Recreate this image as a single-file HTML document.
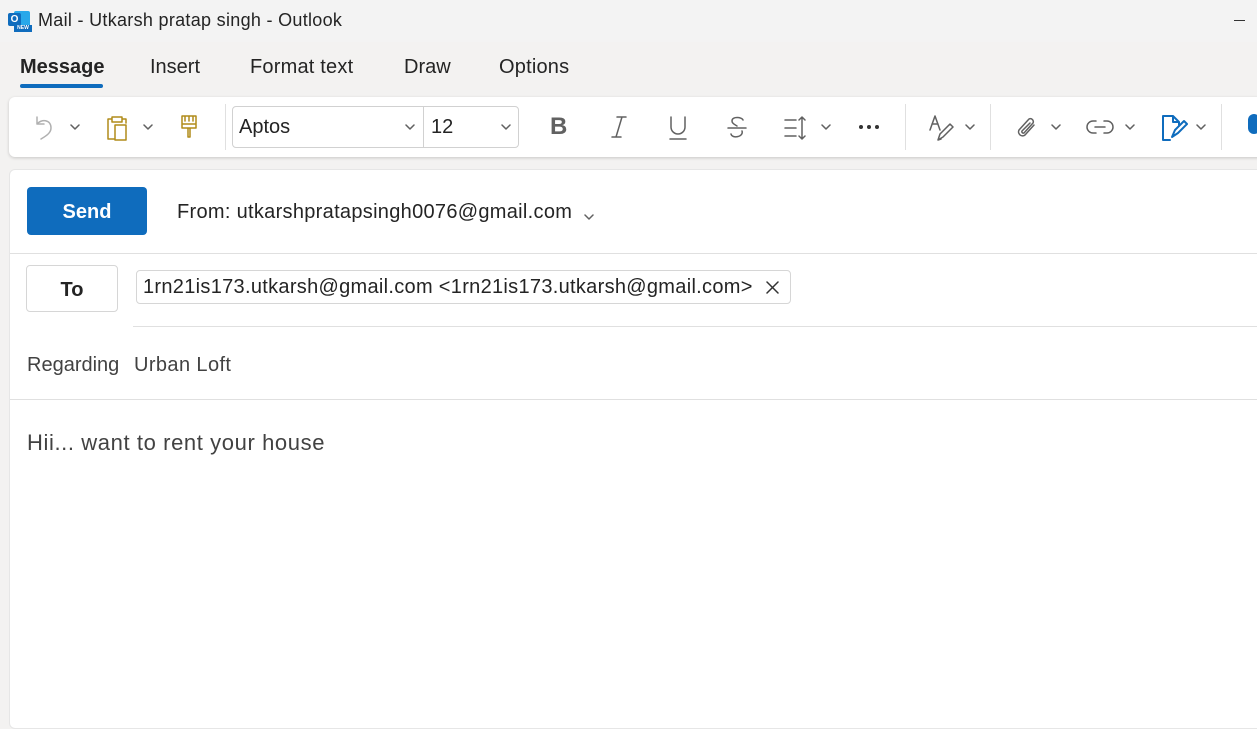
<!DOCTYPE html>
<html><head><style>
*{margin:0;padding:0;box-sizing:border-box}
body{width:1257px;height:710px;overflow:hidden;background:#f3f2f1;font-family:"Liberation Sans",sans-serif;color:#242424;position:relative}
.a{position:absolute;white-space:nowrap}
svg{position:absolute;fill:none;stroke:#616161;stroke-width:1.5;stroke-linecap:round;stroke-linejoin:round}
.chev{width:10px;height:6px}
</style></head><body>
<div class="a" style="left:0;top:0;width:1257px;height:42px;background:#f3f3f3"></div>
<div class="a" style="left:8px;top:9px;width:24px;height:24px">
 <div class="a" style="left:6px;top:2px;width:16px;height:18px;background:#28a8ea;border-radius:2px"></div>
 <div class="a" style="left:0;top:4px;width:13px;height:13px;background:#0f6cbd;border-radius:2px;color:#fff;font-size:10px;font-weight:bold;text-align:center;line-height:13px">O</div>
 <div class="a" style="left:6px;top:16px;width:18px;height:7px;background:#0f6cbd;color:#fff;font-size:5px;font-weight:bold;line-height:7px;text-align:center">NEW</div>
</div>
<div class="a" style="left:38px;top:10px;font-size:18px;letter-spacing:0.3px">Mail - Utkarsh pratap singh - Outlook</div>
<div class="a" style="left:1234px;top:20px;width:11px;height:1px;background:#333"></div>

<div class="a" style="left:20px;top:56px;font-size:20px;font-weight:bold;color:#242424">Message</div>
<div class="a" style="left:20px;top:84px;width:83px;height:4px;border-radius:2px;background:#0f6cbd"></div>
<div class="a" style="left:150px;top:56px;font-size:20px">Insert</div>
<div class="a" style="left:250px;top:56px;font-size:20px;letter-spacing:0.2px">Format text</div>
<div class="a" style="left:404px;top:56px;font-size:20px">Draw</div>
<div class="a" style="left:499px;top:56px;font-size:20px;letter-spacing:0.2px">Options</div>

<div class="a" style="left:9px;top:97px;width:1270px;height:60px;background:#fff;border-radius:6px;box-shadow:0 1px 3px rgba(0,0,0,.18)"></div>
<svg style="left:33px;top:114px;width:24px;height:26px;stroke:#b0b0b0" viewBox="0 0 24 26"><path d="M4 3v7h7M4 10c4-5 14-5 14 4 0 5-5 8-10 11"/></svg>
<svg class="chev" style="left:70px;top:124px" viewBox="0 0 10 6"><path d="M1 1l4 4 4-4"/></svg>
<svg style="left:104px;top:114px;width:26px;height:28px;stroke:#b08c1a" viewBox="0 0 26 28"><path d="M8 5H4v20h6M18 5h4v4M8 3h10v5H8zM11 11h11v15H11z"/></svg>
<svg class="chev" style="left:143px;top:124px" viewBox="0 0 10 6"><path d="M1 1l4 4 4-4"/></svg>
<svg style="left:179px;top:114px;width:20px;height:26px;stroke:#b08c1a" viewBox="0 0 20 26"><path d="M3 2h14v12H3zM3 10h14M9 14v9h2v-9M6 2v5M10 2v5M14 2v5"/></svg>
<div class="a" style="left:225px;top:104px;width:1px;height:46px;background:#e0e0e0"></div>
<div class="a" style="left:232px;top:106px;width:287px;height:42px;border:1px solid #d1d1d1;border-radius:4px"></div>
<div class="a" style="left:423px;top:107px;width:1px;height:40px;background:#d1d1d1"></div>
<div class="a" style="left:239px;top:116px;font-size:20px">Aptos</div>
<svg class="chev" style="left:405px;top:124px" viewBox="0 0 10 6"><path d="M1 1l4 4 4-4"/></svg>
<div class="a" style="left:431px;top:116px;font-size:20px">12</div>
<svg class="chev" style="left:501px;top:124px" viewBox="0 0 10 6"><path d="M1 1l4 4 4-4"/></svg>
<div class="a" style="left:550px;top:113px;font-size:24px;font-weight:bold;color:#616161">B</div>
<svg style="left:608px;top:115px;width:22px;height:24px" viewBox="0 0 22 24"><path d="M9 2h9M4 22h9M14 2L8 22"/></svg>
<svg style="left:667px;top:115px;width:22px;height:26px" viewBox="0 0 22 26"><path d="M4 2v10a7 7 0 0014 0V2M3 24h16"/></svg>
<svg style="left:726px;top:115px;width:22px;height:26px" viewBox="0 0 22 26"><path d="M17 5c-1-3-11-4-11 1 0 3 4 4 5 5M2 13h18M16 16c2 6-10 8-11 3"/></svg>
<svg style="left:783px;top:115px;width:28px;height:26px" viewBox="0 0 28 26"><path d="M2 5h11M2 13h11M2 21h11M19 2v22M16 5l3-3 3 3M16 21l3 3 3-3"/></svg>
<svg class="chev" style="left:821px;top:124px" viewBox="0 0 10 6"><path d="M1 1l4 4 4-4"/></svg>
<svg style="left:858px;top:124px;width:22px;height:6px;fill:#333;stroke:none" viewBox="0 0 22 6"><circle cx="3" cy="3" r="2"/><circle cx="11" cy="3" r="2"/><circle cx="19" cy="3" r="2"/></svg>
<div class="a" style="left:905px;top:104px;width:1px;height:46px;background:#e0e0e0"></div>
<svg style="left:928px;top:114px;width:28px;height:28px" viewBox="0 0 28 28"><path d="M2 16L7 2l5 14M4 10h6M10 26l2-6 10-10 3 3-10 10zM10 26l3-1"/></svg>
<svg class="chev" style="left:965px;top:124px" viewBox="0 0 10 6"><path d="M1 1l4 4 4-4"/></svg>
<div class="a" style="left:990px;top:104px;width:1px;height:46px;background:#e0e0e0"></div>
<svg style="left:1014px;top:114px;width:26px;height:28px" viewBox="0 0 26 28"><path d="M20 11l-9 10a4 4 0 01-6-5L15 5a3 3 0 014 4L10 19a1.5 1.5 0 01-2-2l8-8"/></svg>
<svg class="chev" style="left:1051px;top:124px" viewBox="0 0 10 6"><path d="M1 1l4 4 4-4"/></svg>
<svg style="left:1086px;top:118px;width:28px;height:18px" viewBox="0 0 28 18"><path d="M10 3H7a6 6 0 000 12h3M18 3h3a6 6 0 010 12h-3M9 9h10"/></svg>
<svg class="chev" style="left:1125px;top:124px" viewBox="0 0 10 6"><path d="M1 1l4 4 4-4"/></svg>
<svg style="left:1160px;top:113px;width:28px;height:30px;stroke:#0f6cbd;stroke-width:2" viewBox="0 0 28 30"><path d="M10 27H3V3h10l6 6v3M13 3v6h6M12 24l3-7 9-9 3 3-9 9z"/></svg>
<svg class="chev" style="left:1196px;top:124px" viewBox="0 0 10 6"><path d="M1 1l4 4 4-4"/></svg>
<div class="a" style="left:1221px;top:104px;width:1px;height:46px;background:#e0e0e0"></div>
<div class="a" style="left:1248px;top:114px;width:12px;height:20px;border-radius:6px;background:#0f6cbd"></div>

<div class="a" style="left:9px;top:169px;width:1260px;height:560px;background:#fff;border:1px solid #e6e6e6;border-radius:6px"></div>
<div class="a" style="left:27px;top:187px;width:120px;height:48px;background:#0f6cbd;border-radius:4px;color:#fff;font-size:20px;font-weight:bold;text-align:center;line-height:50px">Send</div>
<div class="a" style="left:177px;top:201px;font-size:20px;letter-spacing:0.3px">From: utkarshpratapsingh0076@gmail.com</div>
<svg class="chev" style="left:584px;top:214px" viewBox="0 0 10 6"><path d="M1 1l4 4 4-4"/></svg>
<div class="a" style="left:10px;top:253px;width:1250px;height:1px;background:#e0e0e0"></div>
<div class="a" style="left:26px;top:265px;width:92px;height:47px;border:1px solid #d6d6d6;border-radius:4px;font-size:20px;font-weight:bold;text-align:center;line-height:49px">To</div>
<div class="a" style="left:136px;top:270px;width:655px;height:34px;border:1px solid #d6d6d6;border-radius:4px"></div>
<div class="a" style="left:143px;top:276px;font-size:20px;letter-spacing:0.3px">1rn21is173.utkarsh@gmail.com &lt;1rn21is173.utkarsh@gmail.com&gt;</div>
<svg style="left:766px;top:281px;width:13px;height:13px;stroke:#333" viewBox="0 0 13 13"><path d="M1 1l11 11M12 1L1 12"/></svg>
<div class="a" style="left:133px;top:326px;width:1130px;height:1px;background:#e0e0e0"></div>
<div class="a" style="left:27px;top:354px;font-size:20px;color:#424242">Regarding</div>
<div class="a" style="left:134px;top:354px;font-size:20px;color:#424242;letter-spacing:0.4px">Urban Loft</div>
<div class="a" style="left:10px;top:399px;width:1250px;height:1px;background:#e0e0e0"></div>
<div class="a" style="left:27px;top:430px;font-size:22px;color:#424242;letter-spacing:0.6px">Hii... want to rent your house</div>
</body></html>
